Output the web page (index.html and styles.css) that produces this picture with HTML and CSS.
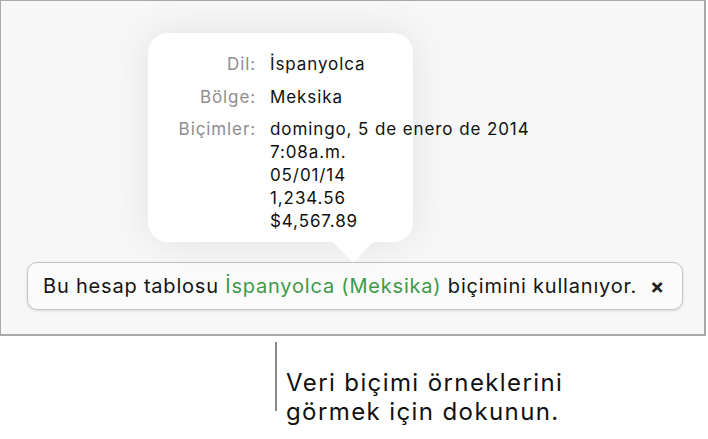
FILE: index.html
```html
<!DOCTYPE html>
<html lang="tr">
<head>
  <meta charset="UTF-8">
  <meta name="viewport" content="width=device-width, initial-scale=1.0">
  <title>Veri biçimi</title>
  <link rel="stylesheet" href="styles.css">
</head>
<body>

<div class="page">
  <div class="shot">
    <div class="popover">
      <div class="rows">
        <span class="label">Dil:</span>
        <span class="value">İspanyolca</span>
        <span class="label">Bölge:</span>
        <span class="value">Meksika</span>
        <span class="label">Biçimler:</span>
        <span class="value lines">domingo, 5 de enero de 2014<br>7:08a.m.<br>05/01/14<br>1,234.56<br>$4,567.89</span>
      </div>
      <svg class="arrow" width="40" height="21" viewBox="0 0 40 21">
        <path d="M0 0 L40 0 L21.5 19.5 Q20 21 18.5 19.5 Z" fill="#ffffff"/>
      </svg>
    </div>

    <div class="banner">
      <span class="msg">Bu hesap tablosu <span class="green">İspanyolca (Meksika)</span> biçimini kullanıyor.</span>
      <span class="close">×</span>
    </div>
  </div>

  <div class="callout">
    <span class="leader"></span>
    <p class="caption">Veri biçimi örneklerini<br>görmek için dokunun.</p>
  </div>
</div>

</body>
</html>
```

FILE: styles.css
```css
body { margin: 0; background-color: #ffffff; font-family: Inter, Roboto, "Liberation Sans", Arial, sans-serif; }
.page { position: relative; width: 708px; height: 439px; overflow: hidden; }
.shot { width: 706px; height: 336px; box-sizing: border-box; border: 1px solid #a9a9a9; border-right-width: 2px; border-bottom-width: 2px; background-color: #f7f7f7; padding-top: 32px; }
.popover { position: relative; width: 265px; height: 209px; margin-left: 147px; background-color: #ffffff; border-radius: 20px; box-shadow: 0 0 40px rgba(0, 0, 0, 0.09); box-sizing: border-box; padding-top: 20px; }
.rows { display: grid; grid-template-columns: 108px auto; column-gap: 14px; row-gap: 9.5px; font-size: 17px; line-height: 23px; letter-spacing: 0.9px; }
.label { color: #8e8e8e; text-align: right; }
.value { color: #111111; white-space: nowrap; }
.arrow { position: absolute; left: 185px; top: 209px; display: block; }
.banner { display: flex; align-items: center; justify-content: space-between; width: 656px; height: 48px; margin: 20px 0 0 26px; box-sizing: border-box; padding: 0 17px 0 15px; background-color: #fbfbfb; border: 1px solid #c4c4c4; border-radius: 10px; box-shadow: 0 1px 3px rgba(0, 0, 0, 0.12); font-size: 20px; letter-spacing: 0.8px; color: #141414; white-space: nowrap; }
.green { color: #3d9a4a; }
.close { font-size: 21px; font-weight: bold; color: #222222; }
.callout { position: relative; }
.leader { position: absolute; left: 275px; top: -26px; width: 2px; height: 69px; background-color: #8a8a8a; }
.caption { margin: 32px 0 0 286px; font-size: 24px; line-height: 29px; letter-spacing: 1.4px; color: #111111; }
```
